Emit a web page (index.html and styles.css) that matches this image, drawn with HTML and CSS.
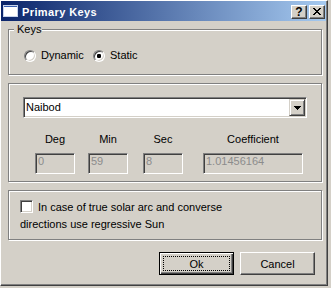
FILE: index.html
```html
<!DOCTYPE html>
<html>
<head>
<meta charset="utf-8">
<title>Primary Keys</title>
<link rel="stylesheet" href="styles.css">
</head>
<body>
<div class="window">
  <div class="titlebar">
    <svg class="appicon" width="15" height="12" viewBox="0 0 15 12" shape-rendering="crispEdges">
      <rect x="0" y="0" width="15" height="12" fill="#fff"/>
      <rect x="0" y="0" width="15" height="2" fill="#3a5fb0"/>
      <rect x="0.5" y="0.5" width="14" height="11" fill="none" stroke="#c8d4ec"/>
    </svg>
    <span class="title">Primary Keys</span>
    <div class="tbtns">
      <span class="tbtn help">?</span>
      <span class="tbtn">
        <svg width="8" height="7" viewBox="0 0 8 7" shape-rendering="crispEdges"><path fill="#000" d="M0 0h2v1h-2zM6 0h2v1h-2zM1 1h2v1h-2zM5 1h2v1h-2zM2 2h4v1h-4zM3 3h2v1h-2zM2 4h4v1h-4zM1 5h2v1h-2zM5 5h2v1h-2zM0 6h2v1h-2zM6 6h2v1h-2z"/></svg>
      </span>
    </div>
  </div>
  <div class="content">
    <fieldset class="group g1">
      <legend>Keys</legend>
      <div class="radios">
        <label class="radio first"><span class="rb"></span>Dynamic</label>
        <label class="radio"><span class="rb on"></span>Static</label>
      </div>
    </fieldset>
    <fieldset class="group g2">
      <div class="g2-inner">
        <div class="combo">
          <span class="ctext">Naibod</span>
          <span class="cbtn"><svg width="7" height="4" viewBox="0 0 7 4" shape-rendering="crispEdges"><path fill="#000" d="M0 0h7v1h-1v1h-1v1h-1v1h-1v-1h-1v-1h-1v-1h-1z"/></svg></span>
        </div>
        <div class="fields">
          <div class="field f-deg"><div class="flabel">Deg</div><div class="input">0</div></div>
          <div class="field f-min"><div class="flabel">Min</div><div class="input">59</div></div>
          <div class="field f-sec"><div class="flabel">Sec</div><div class="input">8</div></div>
          <div class="field f-coef"><div class="flabel">Coefficient</div><div class="input">1.01456164</div></div>
        </div>
      </div>
    </fieldset>
    <fieldset class="group g3">
      <div class="g3-inner">
        <label class="check"><span class="cb"></span>In case of true solar arc and converse<br>directions use regressive Sun</label>
      </div>
    </fieldset>
    <div class="buttons">
      <button class="btn default"><span class="focus">Ok</span></button>
      <button class="btn">Cancel</button>
    </div>
  </div>
</div>
</body>
</html>
```

FILE: styles.css
```css
* { box-sizing: border-box; }
html, body { margin: 0; padding: 0; }
body {
  width: 331px;
  height: 288px;
  overflow: hidden;
  background: #d4d0c8;
  font-family: "Liberation Sans", Arial, sans-serif;
  font-size: 11px;
  color: #000;
}
.window {
  width: 328px;
  height: 286px;
  background: #d4d0c8;
  border: 1px solid;
  border-color: #fff #404040 #404040 #fff;
  box-shadow: inset -1px -1px 0 #808080;
  padding: 0 1px 1px 0;
  display: flex;
  flex-direction: column;
}
.titlebar {
  height: 20px;
  flex: none;
  background: linear-gradient(to right, #0a246a, #a6caf0);
  display: flex;
  align-items: flex-start;
  color: #fff;
}
.appicon { margin: 4px 0 0 2px; flex: none; }
.title {
  margin: 5px 0 0 4px;
  line-height: 13px;
  font-weight: bold;
  letter-spacing: 0.4px;
}
.tbtns {
  margin: 4px 1px 0 auto;
  display: flex;
  gap: 2px;
}
.tbtn {
  width: 16px;
  height: 14px;
  background: #d4d0c8;
  border: 1px solid;
  border-color: #fff #404040 #404040 #fff;
  box-shadow: inset -1px -1px 0 #808080;
  display: flex;
  align-items: center;
  justify-content: center;
  color: #000;
  font-weight: bold;
  font-size: 12px;
  line-height: 1;
}
.tbtn.help { padding-bottom: 1px; }
.tbtn svg { margin-bottom: 1px; }

.content {
  padding: 2px 0 0 7px;
  display: flex;
  flex-direction: column;
}
.group {
  margin: 0;
  padding: 0;
  min-width: 0;
  width: 314px;
  border: 1px solid #808080;
  box-shadow: 1px 1px 0 #fff, inset 1px 1px 0 #fff;
}
.g1 legend {
  margin-left: 5px;
  padding: 0 1px 0 3px;
  line-height: 13px;
  background: #d4d0c8;
}
.radios {
  display: flex;
  align-items: center;
  padding: 13px 0 12px 15px;
  line-height: 13px;
}
.radio { display: flex; align-items: center; }
.radio.first { width: 69px; }
.rb {
  width: 12px;
  height: 12px;
  margin-right: 5px;
  border-radius: 50%;
  border: 1px solid;
  border-color: #808080 #fff #fff #808080;
  background: #fff;
  box-shadow: inset 1px 1px 0 #404040, inset -1px -1px 0 #d4d0c8;
}
.rb.on { background: radial-gradient(circle at center, #000 0 2px, #fff 2.4px); }

.g2 { margin-top: 8px; }
.g2-inner { padding: 13px 14px 7px; }
.combo {
  height: 21px;
  display: flex;
  align-items: stretch;
  background: #fff;
  border: 1px solid;
  border-color: #808080 #fff #fff #808080;
  box-shadow: inset 1px 1px 0 #404040, inset -1px -1px 0 #d4d0c8;
  padding: 1px;
}
.ctext {
  flex: 1;
  padding-left: 1px;
  line-height: 17px;
}
.cbtn {
  width: 16px;
  background: #d4d0c8;
  border: 1px solid;
  border-color: #d4d0c8 #404040 #404040 #d4d0c8;
  box-shadow: inset 1px 1px 0 #fff, inset -1px -1px 0 #808080;
  display: flex;
  align-items: center;
  justify-content: center;
}
.cbtn svg { margin: 0 0 0 1px; }
.fields {
  display: flex;
  margin-top: 15px;
}
.field { display: flex; flex-direction: column; align-items: center; }
.flabel { line-height: 13px; margin-bottom: 7px; white-space: nowrap; }
.input {
  width: 40px;
  height: 21px;
  align-self: stretch;
  border: 1px solid;
  border-color: #808080 #fff #fff #808080;
  box-shadow: inset 1px 1px 0 #404040, inset -1px -1px 0 #d4d0c8;
  padding: 1px 2px;
  line-height: 13px;
  color: #8c8c8c;
  white-space: nowrap;
  overflow: hidden;
}
.f-deg { width: 40px; margin-left: 12px; }
.f-min { width: 40px; margin-left: 13px; }
.f-sec { width: 40px; margin-left: 15px; }
.f-coef { width: 100px; margin-left: 20px; }
.f-coef .input { width: 100px; }

.g3 { margin-top: 8px; }
.g3-inner { padding: 8px 0 6px 11px; line-height: 17px; }
.cb {
  display: inline-block;
  width: 13px;
  height: 13px;
  vertical-align: top;
  margin: 1px 5px 0 0;
  background: #fff;
  border: 1px solid;
  border-color: #808080 #fff #fff #808080;
  box-shadow: inset 1px 1px 0 #404040, inset -1px -1px 0 #d4d0c8;
}

.buttons {
  margin-top: 12px;
  display: flex;
  justify-content: flex-end;
  gap: 6px;
  padding-right: 11px;
}
.btn {
  width: 75px;
  height: 23px;
  margin: 0;
  padding: 0;
  font: inherit;
  color: #000;
  background: #d4d0c8;
  border: 1px solid;
  border-color: #fff #404040 #404040 #fff;
  box-shadow: inset -1px -1px 0 #808080;
  display: flex;
  align-items: center;
  justify-content: center;
}
.btn.default {
  border: 1px solid #000;
  box-shadow: inset 1px 1px 0 #fff, inset -1px -1px 0 #404040, inset -2px -2px 0 #808080;
  padding: 3px;
}
.focus {
  flex: 1;
  align-self: stretch;
  border: 1px dotted #000;
  display: flex;
  align-items: center;
  justify-content: center;
}
```
